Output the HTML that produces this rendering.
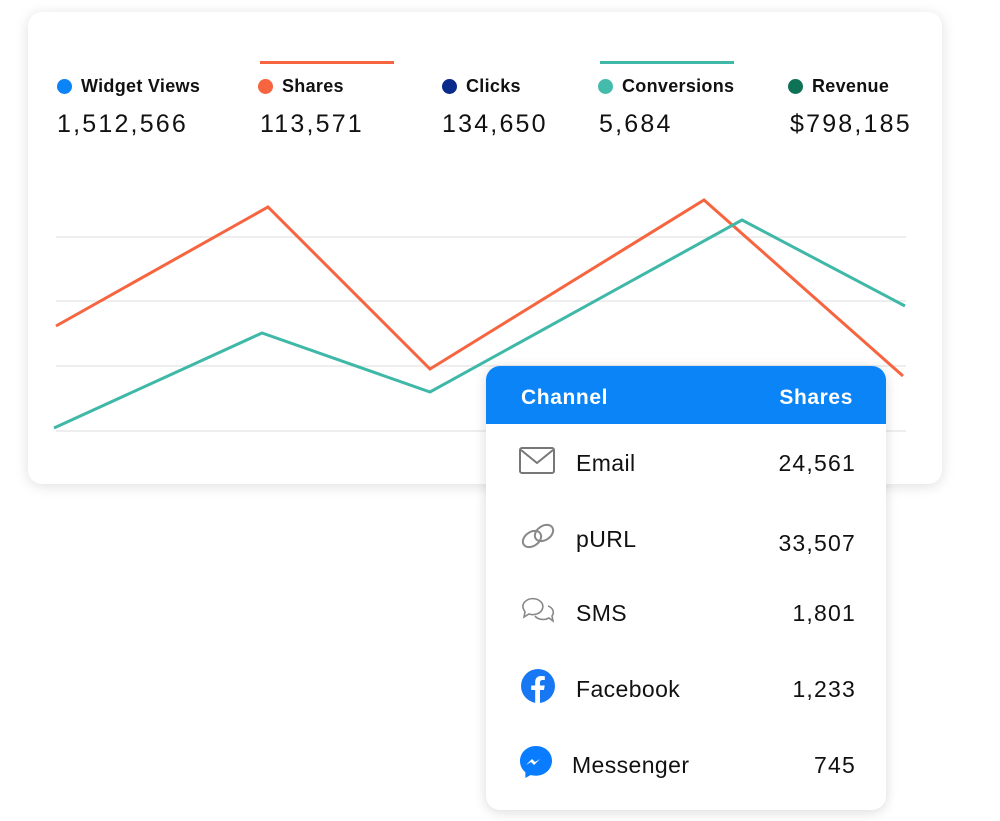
<!DOCTYPE html>
<html><head><style>
body{margin:0;width:1000px;height:821px;background:#fff;font-family:"Liberation Sans",sans-serif;position:relative;overflow:hidden}
.card{position:absolute;left:28px;top:12px;width:914px;height:472px;background:#fff;border-radius:14px;box-shadow:0 2px 14px rgba(0,0,0,.13)}
.leg{position:absolute;top:76px;font-weight:bold;font-size:18px;color:#111;letter-spacing:.3px}
.leg i{display:inline-block;width:15px;height:15px;border-radius:50%;margin-right:9px;vertical-align:-2px}
.num{position:absolute;top:110px;font-size:25px;color:#111;letter-spacing:2.2px}
.bar{position:absolute;top:61px;height:3px;width:134px}
.pop{position:absolute;left:486px;top:366px;width:400px;height:444px;background:#fff;border-radius:14px;box-shadow:0 2px 12px rgba(0,0,0,.15);overflow:hidden}
.hd{height:58px;background:#0a84f7;color:#fff;font-weight:bold;font-size:21px;position:relative;letter-spacing:.6px}
.hd span{position:absolute;top:20px}
.row{position:absolute;left:0;width:400px;font-size:23px;color:#111}
.row .ic{position:absolute;left:33px;top:-4px}
.row .l{position:absolute;left:90px;letter-spacing:.4px}
.row .v{position:absolute;right:30px;letter-spacing:1.2px}
</style></head><body>
<div class="card"></div>
<div class="bar" style="left:260px;background:#f6653f"></div>
<div class="bar" style="left:600px;background:#3fb8a8"></div>
<div class="leg" style="left:57px"><i style="background:#0a84f7"></i>Widget Views</div>
<div class="leg" style="left:258px"><i style="background:#f6653f"></i>Shares</div>
<div class="leg" style="left:442px"><i style="background:#0a2a8c"></i>Clicks</div>
<div class="leg" style="left:598px"><i style="background:#45bcab"></i>Conversions</div>
<div class="leg" style="left:788px"><i style="background:#0e7356"></i>Revenue</div>
<div class="num" style="left:57px">1,512,566</div>
<div class="num" style="left:260px">113,571</div>
<div class="num" style="left:442px">134,650</div>
<div class="num" style="left:599px">5,684</div>
<div class="num" style="left:790px">$798,185</div>
<svg style="position:absolute;left:0;top:0" width="1000" height="821">
<g stroke="#eee" stroke-width="2"><line x1="56" y1="237" x2="906" y2="237"/><line x1="56" y1="301" x2="906" y2="301"/><line x1="56" y1="366" x2="906" y2="366"/><line x1="56" y1="431" x2="906" y2="431"/></g>
<polyline fill="none" stroke="#f6653f" stroke-width="3" points="56,326 268,207 430,369 704,200 903,376"/>
<polyline fill="none" stroke="#3fb8a8" stroke-width="3" points="54,428 262,333 430,392 742,220 905,306"/>
</svg>
<div class="pop">
<div class="hd"><span style="left:35px">Channel</span><span style="right:33px">Shares</span></div>
<div class="row" style="top:84px"><svg class="ic" width="36" height="30" viewBox="0 0 36 30"><rect x="1" y="2" width="34" height="25" rx="2" fill="none" stroke="#777" stroke-width="2"/><path d="M2 4 L18 17 L34 4" fill="none" stroke="#777" stroke-width="2"/></svg><span class="l">Email</span><span class="v">24,561</span></div>
<div class="row" style="top:160px"><svg class="ic" width="38" height="28" viewBox="0 0 38 28"><ellipse cx="13" cy="17" rx="10" ry="7" transform="rotate(-35 13 17)" fill="none" stroke="#888" stroke-width="2"/><ellipse cx="25" cy="11" rx="10" ry="7" transform="rotate(-35 25 11)" fill="none" stroke="#888" stroke-width="2"/></svg><span class="l">pURL</span><span class="v" style="top:4px">33,507</span></div>
<div class="row" style="top:234px"><svg class="ic" width="38" height="30" viewBox="0 0 38 30"><path d="M4 12a10 8 0 1 1 6 6l-5 3 1-5z" fill="none" stroke="#888" stroke-width="1.6"/><path d="M16 20a9 6 0 0 0 14 2l4 3-1-5a9 7 0 0 0-4-10" fill="none" stroke="#888" stroke-width="1.6"/></svg><span class="l">SMS</span><span class="v">1,801</span></div>
<div class="row" style="top:310px"><svg class="ic" width="36" height="36" viewBox="0 0 36 36" style="top:-8px;left:34px"><circle cx="18" cy="18" r="17" fill="#1877f2"/><path d="M20 35V22h4l.7-4.5H20v-3c0-1.3.6-2.5 2.6-2.5h2.2V8.2S22.8 8 21 8c-3.6 0-5.8 2.2-5.8 6v3.5h-4V22h4v13z" fill="#fff"/></svg><span class="l">Facebook</span><span class="v">1,233</span></div>
<div class="row" style="top:386px"><svg class="ic" width="36" height="36" viewBox="0 0 36 36" style="top:-8px;left:32px"><path d="M18 2C9 2 2 8.6 2 17c0 4.6 2 8.5 5.4 11.2V34l5.3-3c1.7.5 3.4.7 5.3.7 9 0 16-6.6 16-15S27 2 18 2z" fill="#0a7cff"/><path d="M8 21l6-6 3 3 5-3-6 6-3-3z" fill="#fff"/></svg><span class="l" style="left:86px">Messenger</span><span class="v">745</span></div>
</div>
</body></html>
